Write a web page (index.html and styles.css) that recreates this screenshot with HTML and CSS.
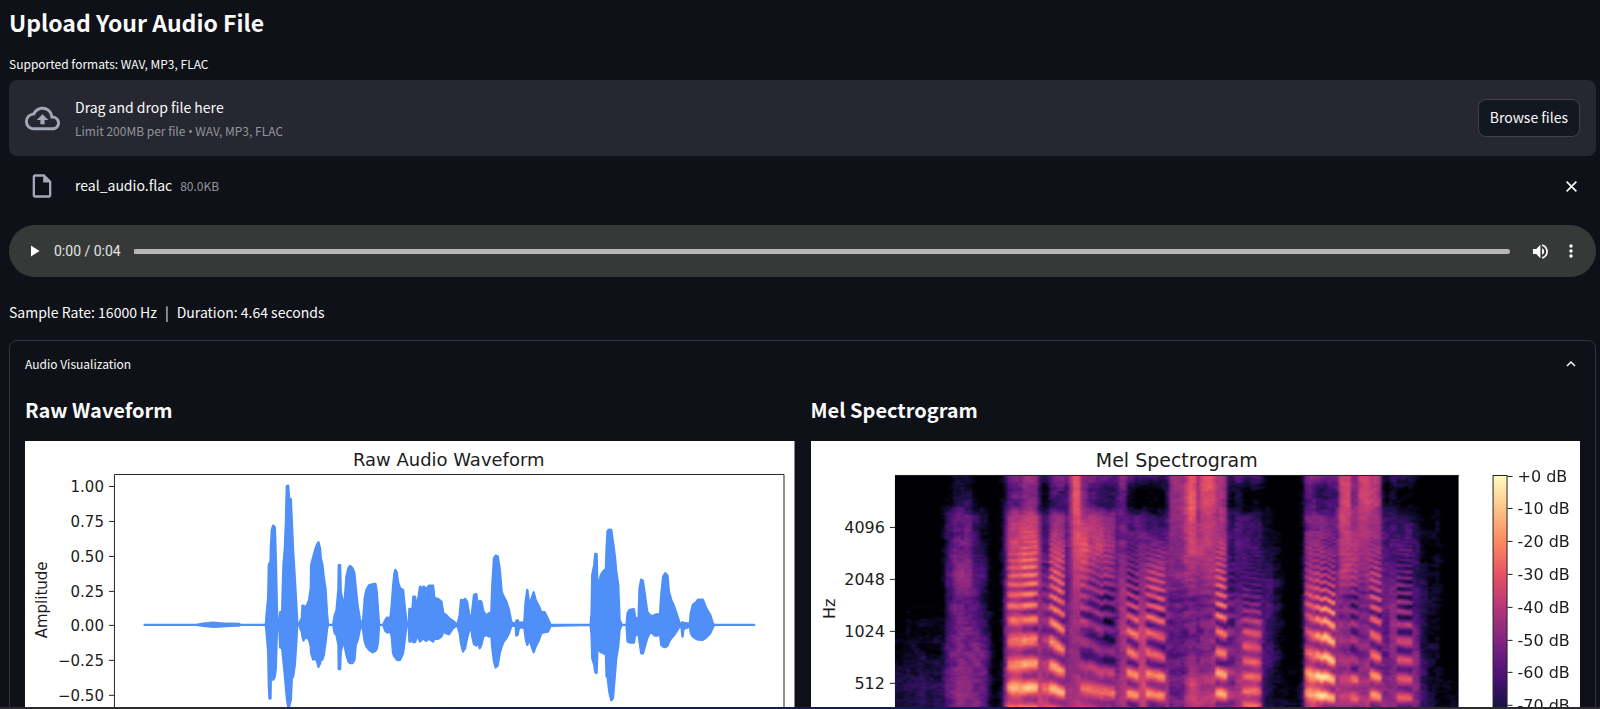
FILE: index.html
```html
<!DOCTYPE html>
<html lang="en">
<head>
<meta charset="utf-8">
<title>Upload Your Audio File</title>
<link rel="stylesheet" href="styles.css">
</head>
<body>
<main class="page">
  <h2 class="title">Upload Your Audio File</h2>
  <label class="upload-label" for="browse">Supported formats: WAV, MP3, FLAC</label>
  <section class="dropzone">
    <svg class="cloud" viewBox="0 0 24 24" aria-hidden="true"><path d="M19.35 10.04A7.49 7.49 0 0 0 12 4C9.11 4 6.6 5.64 5.35 8.04A5.994 5.994 0 0 0 0 14c0 3.31 2.69 6 6 6h13c2.76 0 5-2.24 5-5 0-2.64-2.05-4.78-4.65-4.96zM19 18H6c-2.21 0-4-1.79-4-4s1.79-4 4-4h.71C7.37 7.69 9.48 6 12 6c3.04 0 5.5 2.46 5.5 5.5v.5H19c1.66 0 3 1.34 3 3s-1.34 3-3 3zM8 13h2.55v3h2.9v-3H16l-4-4z"/></svg>
    <div class="drop-text">
      <span class="drop-main">Drag and drop file here</span>
      <small class="drop-limit">Limit 200MB per file <span class="bullet">•</span> WAV, MP3, FLAC</small>
    </div>
    <button class="browse" id="browse" type="button">Browse files</button>
  </section>
  <div class="file-row">
    <svg class="file-icon" viewBox="0 0 24 24" aria-hidden="true"><path d="M14 2H6c-1.100 0-1.990.9-1.990 2L4 20c0 1.100.89 2 1.990 2H18c1.100 0 2-.9 2-2V8l-6-6zM6 20V4h7v5h5v11H6z"/></svg>
    <span class="file-name">real_audio.flac</span>
    <small class="file-size">80.0KB</small>
    <button class="icon-button remove" type="button" aria-label="Remove file"><svg viewBox="0 0 12 12"><path d="M1.500 1.500l9 9M10.500 1.500l-9 9"/></svg></button>
  </div>
  <div class="player">
    <button class="icon-button play" type="button" aria-label="Play"><svg viewBox="0 0 10 12"><path d="M0 0l9.500 6L0 12z"/></svg></button>
    <span class="time">0:00 / 0:04</span>
    <input class="seek" type="range" min="0" max="4.640" step="0.01" value="0" aria-label="Seek">
    <button class="icon-button volume" type="button" aria-label="Mute"><svg viewBox="2 3 19 18"><path d="M3 9v6h4l5 5V4L7 9H3zm13.500 3c0-1.770-1.020-3.290-2.500-4.030v8.050c1.480-.73 2.500-2.250 2.500-4.020zM14 3.230v2.060c2.890.86 5 3.540 5 6.710s-2.110 5.850-5 6.710v2.060c4.010-.91 7-4.490 7-8.770s-2.990-7.860-7-8.770z"/></svg></button>
    <button class="icon-button more" type="button" aria-label="More options"><svg viewBox="0 0 4 14"><circle cx="2" cy="2" r="1.700"/><circle cx="2" cy="7" r="1.700"/><circle cx="2" cy="12" r="1.700"/></svg></button>
  </div>
  <p class="meta"><span>Sample Rate: 16000 Hz</span><span>|</span><span>Duration: 4.64 seconds</span></p>
  <details class="expander" open>
    <summary class="summary"><span>Audio Visualization</span><svg class="chevron" viewBox="0 0 10 7" aria-hidden="true"><path d="M1 6l4-4 4 4"/></svg></summary>
    <div class="columns">
      <section>
        <h3 class="heading">Raw Waveform</h3>
        <svg class="chart" viewBox="0 0 770 308" role="img" aria-label="Raw Audio Waveform">
          <rect width="770" height="308" fill="#fff"/>
          <text class="chart-title" x="424" y="25">Raw Audio Waveform</text>
          <text class="axis-label" transform="translate(22 159) rotate(-90)">Amplitude</text>
          <g class="tick-labels" id="amp-ticks"></g>
          <g transform="translate(95 184) scale(.3333)"><path id="wave" class="wave"/></g>
          <path class="axis" d="M89.500 308V33.500H759.500V308"/>
        </svg>
      </section>
      <section>
        <h3 class="heading">Mel Spectrogram</h3>
        <svg class="chart mel" viewBox="0 0 770 308" role="img" aria-label="Mel Spectrogram">
          <defs><linearGradient id="magma" x1="0" y1="35" x2="0" y2="297" gradientUnits="userSpaceOnUse">
            <stop offset="0" stop-color="#fcfdbf"/><stop offset=".125" stop-color="#fec488"/><stop offset=".25" stop-color="#fc8961"/><stop offset=".375" stop-color="#e75263"/><stop offset=".5" stop-color="#b73779"/><stop offset=".625" stop-color="#832681"/><stop offset=".75" stop-color="#51127c"/><stop offset=".875" stop-color="#1d1147"/><stop offset="1" stop-color="#000004"/>
          </linearGradient></defs>
          <rect width="770" height="308" fill="#fff"/>
          <text class="chart-title" x="366" y="26">Mel Spectrogram</text>
          <text class="axis-label" transform="translate(24 168) rotate(-90)">Hz</text>
          <g class="tick-labels" id="hz-ticks"></g>
          <foreignObject x="84" y="34" width="564" height="274"><canvas class="spectrogram" id="spec" width="146" height="137"></canvas></foreignObject>
          <path class="axis" d="M84 34.500H648"/>
          <rect class="bar" x="682.500" y="34.500" width="14" height="274"/>
          <g class="tick-labels db" id="db-ticks"></g>
        </svg>
      </section>
    </div>
  </details>
</main>
<script src="charts.js"></script>
</body>
</html>
```
FILE: styles.css
```css
* { box-sizing: border-box; }
body {
  margin: 0;
  height: 100vh;
  overflow: hidden;
  background: #0e1117;
  color: #fafafa;
  font-family: "Source Sans Pro", "Noto Sans CJK SC", sans-serif;
  font-size: 14px;
}
body::after {
  content: "";
  position: fixed;
  inset: auto 0 0 0;
  height: 2px;
  background: linear-gradient(90deg, #2c2c30 0, #2c2c30 15%, #151c52 30%, #151c52 65%, #2c2c30 85%);
}
.page { padding: 4px 4px 0 9px; }
.title { margin: 0; font-size: 23px; line-height: 36px; font-weight: 700; }
.upload-label { display: block; margin-top: 14px; font-size: 12px; line-height: 20px; padding-bottom: 6px; }
.dropzone {
  display: flex;
  align-items: center;
  gap: 15px;
  height: 76px;
  padding: 0 16px;
  border-radius: 8px;
  background: #262730;
}
.cloud { width: 35px; height: 35px; fill: #a3a8b8; }
.drop-text { display: flex; flex-direction: column; gap: 4px; flex: 1; padding-top: 2px; }
.drop-main { line-height: 20px; }
.drop-limit { font-size: 12px; line-height: 20px; color: #94959b; }
.bullet { font-family: "Open Sans", sans-serif; }
.browse {
  height: 38px;
  padding: 0 11px 2px;
  border: 1px solid #41434c;
  border-radius: 8px;
  background: #131720;
  color: inherit;
  font: inherit;
}
.file-row { display: flex; align-items: center; height: 60px; padding: 0 18px 0 19px; }
.file-icon { width: 28px; height: 28px; fill: #a3a8b8; margin-right: 19px; }
.file-name { margin-right: 8px; padding-bottom: 2px; }
.file-size { font-size: 12px; color: #94959b; padding-bottom: 2px; }
.icon-button { display: flex; padding: 0; border: 0; background: none; fill: #fff; }
.remove { margin-left: auto; }
.remove svg { width: 13px; height: 13px; fill: none; stroke: #fafafa; stroke-width: 1.5; }
.player {
  display: flex;
  align-items: center;
  height: 52px;
  margin-top: 9px;
  padding: 0 23px 0 22px;
  border-radius: 26px;
  background: #373938;
}
.play svg { width: 9px; height: 12px; }
.time { margin: 0 13px 0 14px; font-family: Roboto, sans-serif; color: #e4e4e4; }
.seek { flex: 1; min-width: 0; height: 5px; margin: 0 22px 0 0; border-radius: 3px; appearance: none; background: #b5b6b5; }
.seek::-webkit-slider-thumb { appearance: none; width: 1px; height: 5px; background: #b5b6b5; }
.volume svg { width: 16px; height: 15px; }
.more { margin-left: 21px; }
.more svg { width: 4px; height: 14px; }
.meta { display: flex; gap: 8px; margin: 23px 0 16px; line-height: 24px; }
.expander { border: 1px solid #31343c; border-radius: 8px 8px 0 0; padding: 0 15px; }
.summary { display: flex; align-items: center; justify-content: space-between; height: 44px; padding-right: 4px; font-size: 12px; list-style: none; }
.chevron { width: 10px; height: 7px; fill: none; stroke: #fafafa; stroke-width: 1.5; }
.columns { display: grid; grid-template-columns: 1fr 1fr; gap: 16px; }
.heading { margin: 0; padding: 10px 0 16px; font-size: 20px; line-height: 30px; font-weight: 700; }
.chart { display: block; width: 100%; font-family: "DejaVu Sans", sans-serif; font-size: 15px; fill: #1c1c1c; }
.mel { font-size: 16px; }
.chart-title { font-size: 18px; text-anchor: middle; }
.mel .chart-title { font-size: 19px; }
.axis-label { text-anchor: middle; }
.tick-labels { text-anchor: end; }
.tick-labels path, .axis { fill: none; stroke: #222; stroke-width: 1; }
.db { text-anchor: start; }
.wave { fill: #4f8ff7; stroke: #4f8ff7; stroke-width: 7; stroke-linejoin: round; }
.bar { fill: url(#magma); stroke: #222; }
.spectrogram { display: block; width: 564px; height: 274px; }
```
FILE: charts.js
```js
function ticks(id, items, x, tickX) {
  document.getElementById(id).innerHTML = items.map(function (t) {
    return '<text x="' + x + '" y="' + (t[1] + 6) + '">' + t[0] + '</text><path d="M' + tickX + ' ' + (t[1] + 0.5) + 'h5"/>';
  }).join('');
}
ticks('amp-ticks', [['1.00', 45], ['0.75', 80], ['0.50', 115], ['0.25', 150], ['0.00', 184], ['−0.25', 219], ['−0.50', 254]], 79, 84);
ticks('hz-ticks', [['4096', 86], ['2048', 138], ['1024', 190], ['512', 242]], 74, 79);
ticks('db-ticks', ['+0', '-10', '-20', '-30', '-40', '-50', '-60', '-70'].map(function (v, i) {
  return [v + ' dB', Math.round(34.5 + i * 32.8)];
}), 707, 697);

// Envelope points: position, level above zero, level below zero.
var env = [
  [74,0,0],[230,0,0],[250,4,3],[280,7,6],[310,4,4],[330,4,3],[358,3,2],[362,0,0],[438,0,0],
  [441,40,30],[445,80,80],[447,180,180],[449,185,221],[452,185,221],[453,230,155],[456,285,155],[460,298,165],[465,293,155],[468,200,130],[471,60,25],[473,0,0],
  [478,0,0],[481,38,68],[487,40,68],[489,120,90],[491,180,110],[495,230,150],[498,300,185],[501,416,220],[505,418,245],[508,380,245],[513,378,225],[516,310,160],[520,220,155],[525,140,120],[529,70,60],[532,15,5],[534,0,0],
  [539,0,0],[542,12,12],[546,20,20],[548,58,35],[551,58,47],[555,50,40],[562,60,38],[568,75,45],[573,110,65],[574,180,85],[580,203,104],[586,225,100],[592,242,110],[596,248,126],[601,228,115],[603,200,104],[608,180,104],[612,142,90],[617,110,55],[622,30,10],[625,0,0],
  [640,0,0],[645,30,25],[650,42,30],[653,75,45],[656,110,60],[657,179,133],[661,179,133],[663,100,80],[668,75,60],[672,45,45],[676,90,70],[680,145,90],[686,170,110],[691,177,115],[698,170,115],[704,155,105],[708,110,60],[714,55,45],[720,20,15],[724,0,0],
  [730,12,15],[735,80,50],[740,105,65],[748,119,75],[758,122,82],[767,123,78],[771,100,72],[775,40,50],[778,0,0],
  [790,0,0],[797,15,18],[802,22,23],[812,20,20],[816,60,35],[820,115,85],[824,155,95],[827,165,98],[831,158,104],[835,128,106],[841,110,105],[850,105,85],[855,55,45],[860,10,5],[867,0,0],[869,48,50],[873,48,50],[876,20,25],[881,85,52],[886,85,52],[890,60,40],[895,75,35],[901,115,50],[908,110,42],[912,115,42],[919,108,48],[928,118,42],[940,118,50],[944,80,42],[955,78,42],[965,70,35],[971,35,20],[979,30,25],[988,20,28],[1000,12,10],[1010,3,3],
  [1014,3,5],[1020,30,25],[1024,75,55],[1030,72,80],[1036,78,70],[1042,70,40],[1048,35,18],[1055,8,8],[1058,45,35],[1063,90,58],[1070,92,62],[1074,60,45],[1080,72,70],[1085,70,60],[1091,40,35],[1100,28,30],[1108,35,35],[1115,38,30],[1118,120,70],[1123,200,110],[1128,208,128],[1134,206,122],[1140,170,85],[1146,100,65],[1152,85,50],[1160,70,40],[1168,45,25],[1175,8,3],[1188,3,3],[1190,12,32],[1194,14,30],[1198,6,8],[1214,8,8],[1218,70,40],[1223,105,60],[1228,70,45],[1233,70,55],[1242,98,82],[1248,75,65],[1258,55,45],[1265,38,25],[1275,38,22],[1285,18,20],[1293,0,3],
  [1413,0,0],[1416,35,30],[1418,150,100],[1424,180,120],[1427,213,142],[1431,213,145],[1434,100,60],[1438,125,75],[1444,150,82],[1452,162,85],[1459,168,90],[1461,230,155],[1464,282,155],[1469,286,200],[1475,285,226],[1480,250,220],[1486,205,150],[1490,160,100],[1496,120,65],[1500,15,15],[1507,0,0],
  [1521,0,0],[1524,35,50],[1530,45,53],[1543,47,53],[1547,20,30],[1557,20,30],[1560,110,50],[1565,136,85],[1570,132,86],[1576,90,65],[1583,40,40],[1590,30,25],[1600,25,25],[1605,30,32],[1615,32,32],[1621,25,20],[1625,90,60],[1631,145,65],[1637,155,67],[1644,148,62],[1648,100,52],[1655,75,40],[1664,55,30],[1674,25,15],[1681,3,3],[1686,3,8],[1689,8,35],[1692,6,12],[1711,4,5],[1714,35,25],[1720,60,35],[1730,68,42],[1736,76,44],[1750,76,45],[1760,50,38],[1772,30,25],[1780,5,8],[1784,0,0],[1904,0,0]
];
var d = 'M' + env.map(function (p) { return p[0] + ' ' + -p[1]; }).join('L');
d += 'L' + env.slice().reverse().map(function (p) { return p[0] + ' ' + p[2]; }).join('L') + 'Z';
document.getElementById('wave').setAttribute('d', d);

// Spectrogram bands: start, end, base pitch, harmonic strength, pitch change, levels sampled at the heights in `ys`.
var ys = [0, 15, 30, 42, 75, 100, 125, 155, 185, 210, 234];
var bands = [
  [0,12,0,0,0,0,0,0,0,0,0,0,0,3,12,8],[12,50,0,0,0,0,0,0,0,0,0,0,3,9,15,12],
  [50,57,0,0,0,0,0,3,20,20,28,22,26,28,32,28],[57,77,0,0,0,8,10,18,30,32,42,32,34,33,39,38],
  [77,84,0,0,0,0,0,2,17,22,28,25,32,36,33,36],[84,92,0,0,0,0,0,0,5,7,22,12,20,32,30,25],[92,97,0,0,0,0,0,0,0,0,2,2,14,16,12,6],
  [97,109,0,0,0,0,0,0,0,0,0,0,0,0,2,5],[109,112,0,0,0,14,8,10,25,27,25,25,30,32,36,40],
  [112,127,238,13,0,36,29,28,49,56,58,57,57,60,70,66],[127,143,238,21,4,46,38,38,53,62,61,56,54,58,68,66],
  [143,146,0,0,0,32,10,12,32,42,42,42,40,42,52,55],[146,155,240,8,-8,8,2,3,20,22,26,34,40,43,57,60],[155,169,236,21,-24,36,25,17,43,52,56,53,55,58,64,60],
  [169,174,0,0,0,24,14,13,24,25,20,22,22,28,38,38],[174,179,0,0,0,43,43,38,42,42,38,39,42,42,43,47],
  [179,187,0,0,0,66,67,65,61,60,54,48,44,43,46,50],[187,195,236,11,-10,38,34,38,50,61,50,42,38,36,60,54],[195,208,230,12,-20,36,20,22,46,52,41,33,31,33,58,51],
  [208,219,218,15,-8,36,16,10,40,46,39,25,22,26,56,52],[219,223,0,0,0,26,20,21,25,30,30,30,29,28,35,35],
  [223,231,0,0,0,42,33,27,31,36,43,45,49,44,48,51],[231,243,214,21,-16,26,4,4,25,27,28,38,52,50,60,52],[243,250,0,0,0,28,0,0,26,35,40,43,54,54,55,52],
  [250,270,210,20,-16,26,1,0,15,34,46,47,46,48,61,49],[270,274,0,0,0,14,10,7,18,31,34,32,30,28,45,46],
  [274,288,180,3,0,43,43,42,42,38,38,28,28,30,28,35],[288,293,185,4,0,50,50,52,50,50,44,33,32,36,44,48],[293,300,185,4,0,64,65,67,61,54,44,33,32,39,56,54],[300,305,0,0,0,35,35,35,36,48,42,28,29,30,51,50],
  [305,320,190,4,0,60,60,57,52,49,43,34,36,38,47,51],[320,333,213,24,-12,48,46,47,46,48,52,51,50,52,64,55],
  [333,339,210,8,0,9,1,2,17,20,18,25,27,33,40,41],[339,348,0,0,0,30,12,10,24,26,24,28,34,40,45,48],[348,368,150,11,-5,25,3,0,17,24,20,28,51,53,60,54],
  [368,378,0,0,0,0,0,0,5,12,18,22,21,20,12,10],[378,387,0,0,0,0,0,0,0,4,7,12,8,13,4,5],[387,409,0,0,0,0,0,0,0,0,0,0,0,0,2,5],
  [409,420,214,12,-14,39,28,27,35,40,45,54,51,60,74,66],[420,429,206,21,-14,37,17,13,34,42,44,54,59,60,77,66],[429,440,200,24,-16,34,18,21,33,36,40,54,63,66,68,60],
  [440,443,0,0,0,32,18,22,26,31,28,34,34,35,40,44],[443,454,190,5,0,59,59,60,59,48,53,35,40,43,48,51],[454,463,195,13,-8,35,34,38,42,47,46,28,34,36,61,49],
  [463,474,180,4,0,58,58,56,50,46,41,33,36,38,42,48],[474,487,206,21,-14,51,51,49,46,43,44,47,49,50,63,53],
  [487,493,0,0,0,6,1,4,13,28,24,31,28,26,36,39],[493,503,0,0,0,21,9,8,20,23,30,39,42,38,39,44],[503,517,190,18,-3,20,0,0,17,25,22,28,36,42,50,46],
  [517,524,0,0,0,3,0,0,5,17,18,20,36,38,37,36],[524,532,0,0,0,0,0,0,0,4,10,12,10,13,16,18],[532,537,0,0,0,0,0,0,0,0,0,3,3,5,5,6],
  [537,544,0,0,0,0,0,0,3,6,5,6,3,5,4,6],[544,565,0,0,0,0,0,0,0,0,0,0,0,0,1,4]
];
var magma = [[0,0,4],[29,17,71],[81,18,124],[131,38,129],[183,55,121],[231,82,99],[252,137,97],[254,196,136],[252,253,191]];
function noise(a, b) {
  var s = Math.sin(a * 127.1 + b * 311.7) * 43758.5453;
  return s - Math.floor(s);
}
function level(b, y) {
  var i = 0;
  while (i < ys.length - 2 && y > ys[i + 1]) i++;
  var k = Math.min(1, (y - ys[i]) / (ys[i + 1] - ys[i]));
  return b[5 + i] * (1 - k) + b[6 + i] * k;
}
// The mel bins turn linear at the low end of the range.
function frequency(y) {
  if (y > 166) return 947 - (y - 166) * 10;
  return 8192 * Math.pow(2, -y / 52) + 50 * Math.max(0, (y - 140) / 26);
}
function bandAt(x) {
  return bands.find(function (b) { return x < b[1]; }) || bands[bands.length - 1];
}
var ctx = document.getElementById('spec').getContext('2d');
var image = ctx.createImageData(146, 137);
for (var c = 0; c < 146; c++) {
  var x = (c + 0.5) * 564 / 146, b = bandAt(x), prev = bandAt(Math.max(0, x - 4)), next = bandAt(x + 4);
  for (var r = 0; r < 137; r++) {
    var y = r * 2 + 1, v = level(b, y) * 0.7 + level(prev, y) * 0.15 + level(next, y) * 0.15;
    if (b[2]) {
      var pitch = b[2] + b[4] * (x - b[0]) / (b[1] - b[0]);
      var fade = Math.min(1, Math.max(0.06, (y - 45) / 85));
      v += Math.cos(2 * Math.PI * frequency(y) / pitch) * b[3] * fade;
    }
    var rough = v > 35 ? 6 : 9;
    if (v > 0.8) v += (noise(c, r) - 0.5) * rough + (noise(c >> 1, (r >> 2) + 50) - 0.5) * rough;
    var t = Math.max(0, Math.min(0.999, v / 100)) * 8, q = Math.floor(t), m = t - q, o = (r * 146 + c) * 4;
    for (var n = 0; n < 3; n++) image.data[o + n] = magma[q][n] * (1 - m) + magma[q + 1][n] * m;
    image.data[o + 3] = 255;
  }
}
ctx.putImageData(image, 0, 0);
```
